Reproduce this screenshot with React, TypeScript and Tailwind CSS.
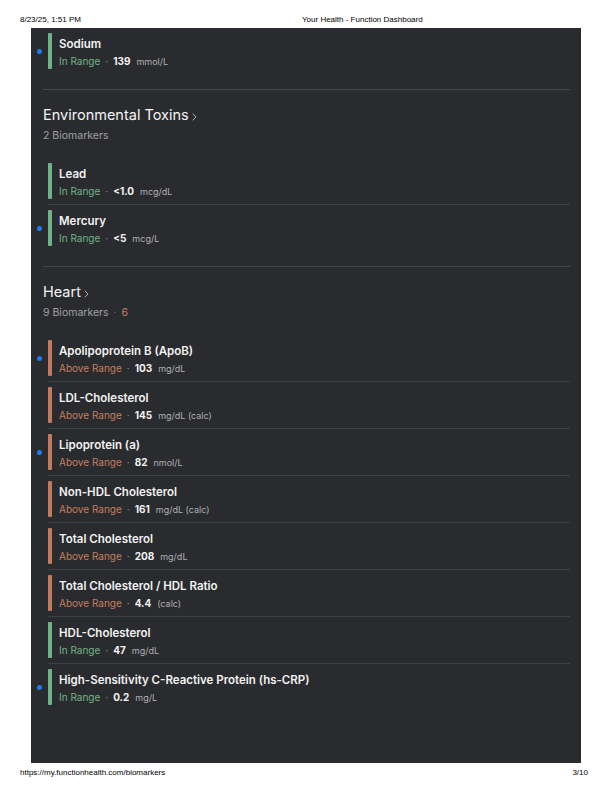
type Marker = {
  name: string;
  status: "in" | "above";
  value: string;
  unit: string;
  flagged?: boolean;
};

type Section = {
  title?: string;
  count?: number;
  outOfRange?: number;
  markers: Marker[];
};

const sections: Section[] = [
  {
    markers: [{ name: "Sodium", status: "in", value: "139", unit: "mmol/L", flagged: true }],
  },
  {
    title: "Environmental Toxins",
    count: 2,
    markers: [
      { name: "Lead", status: "in", value: "<1.0", unit: "mcg/dL" },
      { name: "Mercury", status: "in", value: "<5", unit: "mcg/L", flagged: true },
    ],
  },
  {
    title: "Heart",
    count: 9,
    outOfRange: 6,
    markers: [
      { name: "Apolipoprotein B (ApoB)", status: "above", value: "103", unit: "mg/dL", flagged: true },
      { name: "LDL-Cholesterol", status: "above", value: "145", unit: "mg/dL (calc)" },
      { name: "Lipoprotein (a)", status: "above", value: "82", unit: "nmol/L", flagged: true },
      { name: "Non-HDL Cholesterol", status: "above", value: "161", unit: "mg/dL (calc)" },
      { name: "Total Cholesterol", status: "above", value: "208", unit: "mg/dL" },
      { name: "Total Cholesterol / HDL Ratio", status: "above", value: "4.4", unit: "(calc)" },
      { name: "HDL-Cholesterol", status: "in", value: "47", unit: "mg/dL" },
      {
        name: "High-Sensitivity C-Reactive Protein (hs-CRP)",
        status: "in",
        value: "0.2",
        unit: "mg/L",
        flagged: true,
      },
    ],
  },
];

function MarkerRow({ m, first }: { m: Marker; first: boolean }) {
  const above = m.status === "above";
  return (
    <div className={`relative flex h-[46px] items-start gap-[7px] py-[5px] ${first ? "" : "h-[47px] border-t border-[#3e3f43]"}`}>
      {m.flagged && (
        <span className="absolute left-[-11px] top-[21px] h-[5px] w-[5px] rounded-full bg-[#1f7bf0]" />
      )}
      <div className={`h-[36px] w-[4px] shrink-0 rounded-[1px] ${above ? "bg-[#c27b5e]" : "bg-[#6fb488]"}`} />
      <div className="flex flex-col pt-[3px]">
        <div className="h-[17px] text-[11.5px] font-semibold leading-[17px] text-[#f2f2f2]">{m.name}</div>
        <div className="flex h-[17px] items-center text-[10px] leading-[17px]">
          <span className={above ? "text-[#c47e60]" : "text-[#70b487]"}>
            {above ? "Above Range" : "In Range"}
          </span>
          <span className="mx-[5px] text-[#8a8a8e]">·</span>
          <span className="font-bold text-[#f2f2f2]">{m.value}</span>
          <span className="ml-[6px] text-[9px] text-[#b0b0b4]">{m.unit}</span>
        </div>
      </div>
    </div>
  );
}

function Chevron() {
  return (
    <svg width="5" height="8" viewBox="0 0 5 8" className="ml-[3px] mt-[4px]">
      <path d="M1 1l3 3-3 3" fill="none" stroke="#b0b0b4" strokeWidth="1" strokeLinecap="round" strokeLinejoin="round" />
    </svg>
  );
}

export default function App() {
  return (
    <div className="relative h-[792px] w-[612px] bg-white font-['Inter',sans-serif]">
      <div className="flex h-[28px] items-start pt-[15px] font-['Liberation_Sans',Arial,sans-serif] text-[8px] leading-[10px] text-black">
        <span className="w-[302px] pl-[20px]">8/23/25, 1:51 PM</span>
        <span>Your Health - Function Dashboard</span>
      </div>

      <div className="ml-[31px] h-[735px] w-[550px] overflow-hidden bg-[#2a2b2e] pl-[12px] pr-[11px]">
        {sections.map((s, si) => (
          <div key={si} className={`pb-[15px] ${si > 0 ? "border-t border-[#45464a]" : ""}`}>
            {s.title && (
              <div className="pt-[13px]">
                <div className="flex h-[24px] items-center text-[14.5px] leading-[24px] text-[#f4f4f4]">
                  {s.title}
                  <Chevron />
                </div>
                <div className="mb-[14px] mt-[1px] flex h-[16px] items-center text-[10.5px] leading-[16px] text-[#a0a0a4]">
                  {s.count} Biomarkers
                  {s.outOfRange ? (
                    <>
                      <span className="mx-[5px] text-[#6e6e72]">·</span>
                      <span className="text-[#c47e60]">{s.outOfRange}</span>
                    </>
                  ) : null}
                </div>
              </div>
            )}
            <div className="ml-[5px]">
              {s.markers.map((m, i) => (
                <MarkerRow key={m.name} m={m} first={i === 0} />
              ))}
            </div>
          </div>
        ))}
      </div>

      <div className="flex justify-between pl-[20px] pr-[24px] pt-[5px] font-['Liberation_Sans',Arial,sans-serif] text-[8px] leading-[10px] text-black">
        <span>https://my.functionhealth.com/biomarkers</span>
        <span>3/10</span>
      </div>
    </div>
  );
}
